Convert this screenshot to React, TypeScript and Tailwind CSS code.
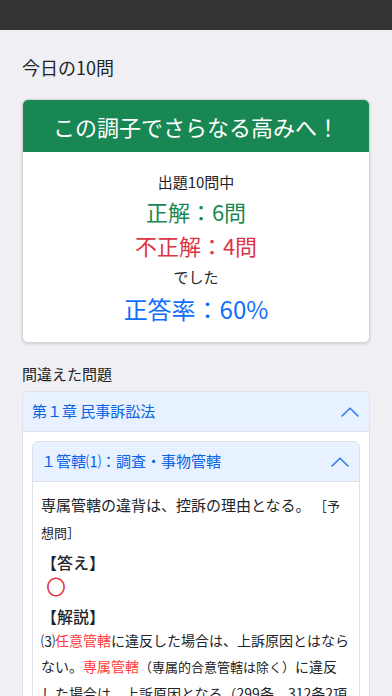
import React from 'react';

const font = { fontFamily: '"Noto Sans CJK JP", "Noto Sans", sans-serif' };

function ChevronUp() {
  return (
    <svg width="18" height="10" viewBox="0 0 18 10" fill="none" className="shrink-0">
      <path d="M1 9 L9 1.2 L17 9" stroke="#2f7de8" strokeWidth="1.6" strokeLinecap="round" strokeLinejoin="round" />
    </svg>
  );
}

export default function App() {
  return (
    <div className="min-h-[696px] bg-[#efeff4] text-[#212529]" style={font}>
      {/* Top bar */}
      <div className="h-[30px] bg-[#333333]" />

      <div className="px-[22px] pb-10">
        <h1 className="pt-[24px] text-[18px] leading-[26px]">今日の10問</h1>

        {/* Result card */}
        <div className="mt-[19px] rounded-[6px] border border-[#d6d6da] bg-white shadow-[0_1px_3px_rgba(0,0,0,0.15)] overflow-hidden">
          <div className="h-[52px] bg-[#198754] flex items-center justify-center text-white text-[22px]">
            この調子でさらなる高みへ！
          </div>
          <div className="pt-[18px] pb-[15px] flex flex-col items-center">
            <p className="text-[15px] leading-[24px]">出題10問中</p>
            <p className="text-[22px] leading-[34px] text-[#198754]">正解：6問</p>
            <p className="text-[22px] leading-[35px] text-[#dc3545]">不正解：4問</p>
            <p className="text-[15px] leading-[28px]">でした</p>
            <p className="text-[24px] leading-[36px] text-[#0d6efd]">正答率：60%</p>
          </div>
        </div>

        <h2 className="mt-[20px] text-[15px] leading-[22px]">間違えた問題</h2>

        {/* Chapter accordion */}
        <div className="mt-[6px] rounded-[6px] border border-[#dee2e6] bg-white overflow-hidden">
          <div className="h-[40px] bg-[#e7f1ff] border-b border-[#dee2e6] flex items-center justify-between pl-[9px] pr-[10px] text-[15px] text-[#0c63e4]">
            <span>第１章 民事訴訟法</span>
            <ChevronUp />
          </div>
          <div className="p-[9px]">
            <div className="rounded-[6px] border border-[#dee2e6] overflow-hidden">
              <div className="h-[40px] bg-[#e7f1ff] border-b border-[#dee2e6] flex items-center justify-between pl-[8px] pr-[10px] text-[15px] text-[#0c63e4]">
                <span>１管轄⑴：調査・事物管轄</span>
                <ChevronUp />
              </div>
              <div className="pl-[8px] pr-[10px] pt-[10px] pb-4">
                <p className="text-[15px] leading-[26px]">
                  専属管轄の違背は、控訴の理由となる。 <span className="text-[13px]">［予想問］</span>
                </p>
                <p className="mt-[4px] text-[16px] leading-[24px] font-medium">【答え】</p>
                <p className="text-[18px] leading-[24px] text-[#dc3545] pl-[6px] [-webkit-text-stroke:0.8px_#dc3545]">◯</p>
                <p className="mt-[7px] text-[16px] leading-[22px] font-medium">【解説】</p>
                <p className="text-[14px] leading-[26px]">
                  ⑶<span className="text-[#ff3b3b]">任意管轄</span>に違反した場合は、上訴原因とはならない。
                  <span className="text-[#ff3b3b]">専属管轄</span>
                  <span className="text-[13px]">（専属的合意管轄は除く）</span>
                  に違反した場合は、上訴原因となる（299条、312条2項3号）。
                </p>
              </div>
            </div>
          </div>
        </div>
      </div>
    </div>
  );
}
